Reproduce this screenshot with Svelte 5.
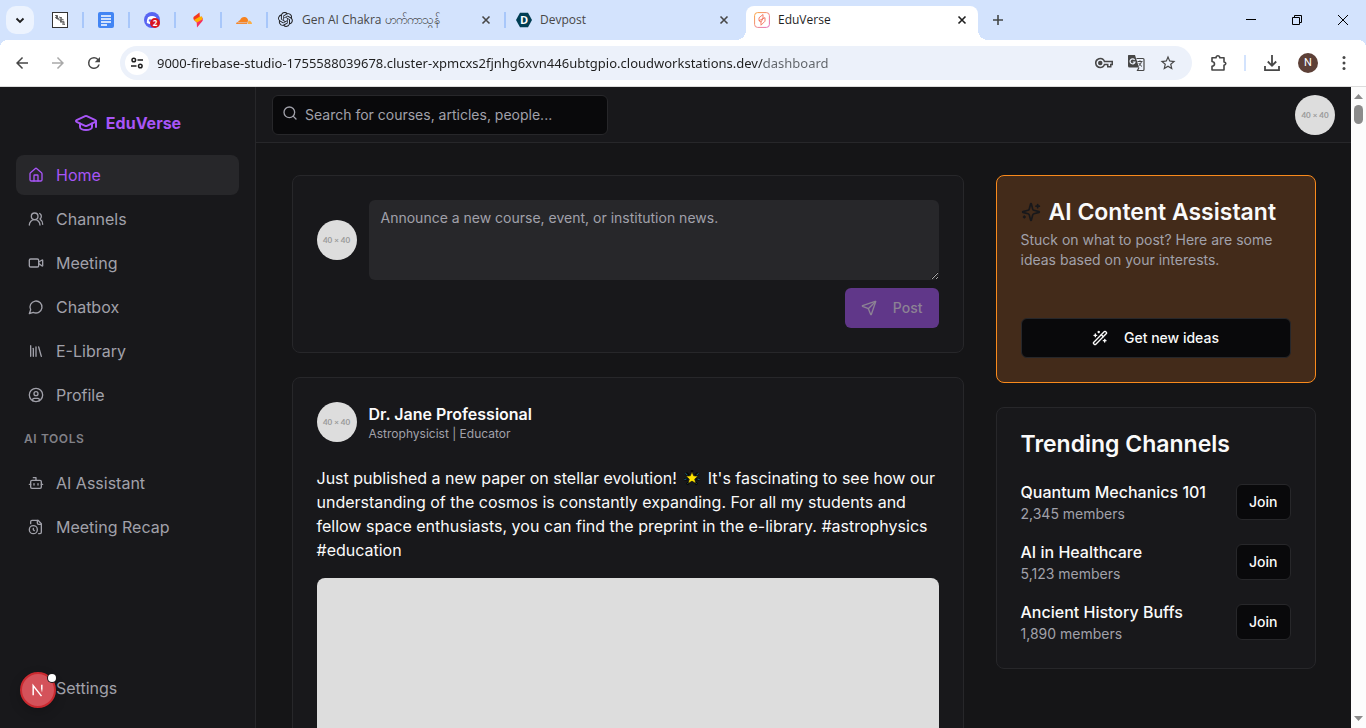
<script lang="ts">
  /**
   * EduVerse dashboard, shown inside its browser window.
   * Stroke icons share a 24-unit grid and are kept as lists of path data.
   */
  type Icon = string[];

  const icons: Record<string, Icon> = {
    cap: [
      'M21.42 10.922a1 1 0 0 0-.019-1.838L12.83 5.18a2 2 0 0 0-1.66 0L2.6 9.08a1 1 0 0 0 0 1.832l8.57 3.908a2 2 0 0 0 1.66 0z',
      'M22 10v6',
      'M6 12.5V16a6 3 0 0 0 12 0v-3.5',
    ],
    home: [
      'M15 21v-8a1 1 0 0 0-1-1h-4a1 1 0 0 0-1 1v8',
      'M3 10a2 2 0 0 1 .709-1.528l7-5.999a2 2 0 0 1 2.582 0l7 5.999A2 2 0 0 1 21 10v9a2 2 0 0 1-2 2H5a2 2 0 0 1-2-2z',
    ],
    users: [
      'M18 21a8 8 0 0 0-16 0',
      'M5 8a5 5 0 1 0 10 0a5 5 0 1 0-10 0',
      'M22 20c0-3.37-2-6.5-4-8a5 5 0 0 0-.45-8.3',
    ],
    video: [
      'm16 13 5.223 3.482a.5.5 0 0 0 .777-.416V7.87a.5.5 0 0 0-.752-.432L16 10.5',
      'M4 6h10a2 2 0 0 1 2 2v8a2 2 0 0 1-2 2H4a2 2 0 0 1-2-2V8a2 2 0 0 1 2-2z',
    ],
    chat: ['M7.9 20A9 9 0 1 0 4 16.1L2 22Z'],
    library: ['m16 6 4 14', 'M12 6v14', 'M8 8v12', 'M4 4v16'],
    profile: [
      'M2 12a10 10 0 1 0 20 0a10 10 0 1 0-20 0',
      'M9 10a3 3 0 1 0 6 0a3 3 0 1 0-6 0',
      'M7 20.662V19a2 2 0 0 1 2-2h6a2 2 0 0 1 2 2v1.662',
    ],
    bot: [
      'M12 8V4H8',
      'M6 8h12a2 2 0 0 1 2 2v8a2 2 0 0 1-2 2H6a2 2 0 0 1-2-2v-8a2 2 0 0 1 2-2z',
      'M2 14h2',
      'M20 14h2',
      'M15 13v2',
      'M9 13v2',
    ],
    recap: [
      'M16 22h2a2 2 0 0 0 2-2V7l-5-5H6a2 2 0 0 0-2 2v3',
      'M14 2v4a2 2 0 0 0 2 2h4',
      'M2 16a6 6 0 1 0 12 0a6 6 0 1 0-12 0',
      'M9.5 17.5 8 16.25V14',
    ],
    settings: [
      'M9 12a3 3 0 1 0 6 0a3 3 0 1 0-6 0',
      'M12 3v3M12 18v3M3 12h3M18 12h3M6 6l2 2M16 16l2 2M6 18l2-2M16 8l2-2',
    ],
    search: ['M3 11a8 8 0 1 0 16 0a8 8 0 1 0-16 0', 'm21 21-4.3-4.3'],
    send: [
      'M14.536 21.686a.5.5 0 0 0 .937-.024l6.5-19a.496.496 0 0 0-.635-.635l-19 6.5a.5.5 0 0 0-.024.937l7.93 3.18a2 2 0 0 1 1.112 1.11z',
      'm21.854 2.147-10.94 10.939',
    ],
    sparkles: [
      'M9.937 15.5A2 2 0 0 0 8.5 14.063l-6.135-1.582a.5.5 0 0 1 0-.962L8.5 9.936A2 2 0 0 0 9.937 8.5l1.582-6.135a.5.5 0 0 1 .963 0L14.063 8.5A2 2 0 0 0 15.5 9.937l6.135 1.581a.5.5 0 0 1 0 .964L15.5 14.063a2 2 0 0 0-1.437 1.437l-1.582 6.135a.5.5 0 0 1-.963 0z',
      'M20 3v4',
      'M22 5h-4',
      'M4 17v2',
      'M5 18H3',
    ],
    wand: [
      'm21.64 3.64-1.28-1.28a1.21 1.21 0 0 0-1.72 0L2.36 18.64a1.21 1.21 0 0 0 0 1.72l1.28 1.28a1.2 1.2 0 0 0 1.72 0L21.64 5.36a1.2 1.2 0 0 0 0-1.72',
      'm14 7 3 3',
      'M5 6v4',
      'M19 14v4',
      'M10 2v2',
      'M7 8H3',
      'M21 16h-4',
      'M11 3H9',
    ],
  };

  const mainNav = [
    { label: 'Home', icon: icons.home },
    { label: 'Channels', icon: icons.users },
    { label: 'Meeting', icon: icons.video },
    { label: 'Chatbox', icon: icons.chat },
    { label: 'E-Library', icon: icons.library },
    { label: 'Profile', icon: icons.profile },
  ];

  const aiNav = [
    { label: 'AI Assistant', icon: icons.bot },
    { label: 'Meeting Recap', icon: icons.recap },
  ];

  const channels = [
    { name: 'Quantum Mechanics 101', members: '2,345' },
    { name: 'AI in Healthcare', members: '5,123' },
    { name: 'Ancient History Buffs', members: '1,890' },
  ];

  const pinned = ['sketch', 'docs', 'discord', 'studio', 'cloud'];

  let url = $state(
    '9000-firebase-studio-1755588039678.cluster-xpmcxs2fjnhg6xvn446ubtgpio.cloudworkstations.dev/dashboard'
  );
  let query = $state('');
  let draft = $state('');
  let current = $state('Home');
</script>

{#snippet stroke(icon: Icon, size: number)}
  <svg
    class="stroke"
    width={size}
    height={size}
    viewBox="0 0 24 24"
    aria-hidden="true"
  >
    {#each icon as d}<path {d} />{/each}
  </svg>
{/snippet}

{#snippet navItem(item: { label: string; icon: Icon })}
  <a
    href="#{item.label}"
    class="nav-item"
    class:active={current === item.label}
    onclick={() => (current = item.label)}
  >
    {@render stroke(item.icon, 16)}
    <span>{item.label}</span>
  </a>
{/snippet}

{#snippet avatar()}
  <span class="avatar">40 × 40</span>
{/snippet}

{#snippet closeIcon()}
  <svg width="10" height="10" viewBox="0 0 10 10" aria-hidden="true">
    <path d="M1.5 1.5l7 7M8.5 1.5l-7 7" fill="none" stroke="currentColor" stroke-width="1.6" />
  </svg>
{/snippet}

{#snippet favicon(name: string)}
  <svg width="16" height="16" viewBox="0 0 16 16" aria-hidden="true">
    {#if name === 'sketch'}
      <rect x=".5" y=".5" width="15" height="15" fill="#fff" stroke="#333" />
      <path d="M3 3.5l3 .5M3 5.5l4 1M4.500 3v4M5.500 3.500v4M7 5l3 1M6 7.500l4 1.500M9 5v6M8 9.500l4 .5M7.500 7l4 .5M10 12l3 .5M12 9.500v3M11 8.500v3" fill="none" stroke="#555" stroke-width=".9" />
    {:else if name === 'docs'}
      <rect width="16" height="16" rx="2" fill="#4285f4" />
      <path d="M3 4h10M3 7h10M3 10h10M3 13h6" fill="none" stroke="#fff" stroke-width="1.3" />
    {:else if name === 'discord'}
      <circle cx="8" cy="8" r="8" fill="#5865f2" />
      <path d="M4 5.2Q8 3 12 5.2Q13.5 8 13.2 11Q8 13.5 2.8 11Q2.5 8 4 5.2z" fill="#fff" />
      <circle cx="6" cy="8.5" r="1.2" fill="#5865f2" />
      <circle cx="11" cy="11" r="5" fill="#d9141e" />
      <text x="11" y="14" text-anchor="middle" fill="#fff" font-size="8" font-weight="700">2</text>
    {:else if name === 'studio'}
      <path d="M9.500 0.500L3.500 5q-.8 2.300 1.200 3.800L10 6.200z" fill="#f5391f" />
      <path d="M5 9l6.500-4.500q2 1.800 1.200 4.200L7 15.500l-.3-5z" fill="#f4305f" />
      <path d="M4 8l5.500-3.200 2.500-.3.600 2.700L7 10.500z" fill="#ffb300" />
    {:else if name === 'cloud'}
      <path d="M0 12q.2-2 2.200-2.300Q2.500 8.200 4 8.200Q5.500 4.800 8.500 5q3 .2 3.600 3.300L11 12z" fill="#f6821f" />
      <path d="M11.700 12l.8-3.500q3 .1 3.500 3.500z" fill="#fbad41" />
      <path d="M1.500 10.700h9.300" fill="none" stroke="#d3e3fd" stroke-width=".6" />
    {:else if name === 'openai'}
      <g transform="scale(.62)">
        <path
          fill="#202124"
          d="M22.282 9.821a5.985 5.985 0 0 0-.516-4.91 6.046 6.046 0 0 0-6.51-2.9A6.065 6.065 0 0 0 4.981 4.182a5.985 5.985 0 0 0-3.998 2.9 6.046 6.046 0 0 0 .743 7.096 5.98 5.98 0 0 0 .511 4.911 6.051 6.051 0 0 0 6.515 2.9A5.985 5.985 0 0 0 13.26 24a6.056 6.056 0 0 0 5.772-4.206 5.99 5.99 0 0 0 3.998-2.9 6.056 6.056 0 0 0-.748-7.073zM13.26 22.43a4.476 4.476 0 0 1-2.876-1.041l.142-.08 4.778-2.759a.795.795 0 0 0 .393-.681v-6.737l2.02 1.169a.071.071 0 0 1 .038.052v5.583a4.504 4.504 0 0 1-4.495 4.494zM3.599 18.304a4.471 4.471 0 0 1-.534-3.014l.142.085 4.783 2.759a.771.771 0 0 0 .78 0l5.843-3.369v2.332a.08.08 0 0 1-.033.062L9.74 19.95a4.5 4.5 0 0 1-6.141-1.646zM2.341 7.896a4.485 4.485 0 0 1 2.365-1.973V11.6a.766.766 0 0 0 .388.677l5.814 3.354-2.02 1.168a.076.076 0 0 1-.071 0l-4.83-2.786A4.504 4.504 0 0 1 2.341 7.872zm16.596 3.855l-5.833-3.387L15.119 7.2a.076.076 0 0 1 .071 0l4.83 2.791a4.494 4.494 0 0 1-.676 8.105v-5.678a.79.79 0 0 0-.407-.667zm2.011-3.023l-.142-.085-4.774-2.782a.776.776 0 0 0-.785 0L9.409 9.23V6.897a.066.066 0 0 1 .028-.061l4.83-2.787a4.5 4.5 0 0 1 6.681 4.66zM8.307 12.863l-2.02-1.164a.08.08 0 0 1-.038-.057V6.074a4.5 4.5 0 0 1 7.375-3.453l-.142.08L8.704 5.459a.795.795 0 0 0-.393.681zm1.097-2.365l2.602-1.5 2.607 1.5v2.999l-2.597 1.5-2.607-1.5z"
        />
      </g>
    {:else if name === 'devpost'}
      <path d="M4 .8h8l4 7.2-4 7.2H4L0 8z" fill="#003e54" />
      <text x="8" y="12" text-anchor="middle" fill="#fff" font-size="11" font-weight="700">D</text>
    {:else}
      <rect x=".6" y=".6" width="14.8" height="14.8" rx="3" fill="#fff" stroke="url(#edu-edge)" />
      <path d="M9 2.5L5 5.800v3L9 6.500zM9 6.500l2-.8v3.500l-4 4V10zM5 8.800l2 1.200" fill="none" stroke="#f4705a" stroke-width=".9" />
      <defs>
        <linearGradient id="edu-edge" x1="0" y1="0" x2="1" y2="1">
          <stop offset="0" stop-color="#fba43c" />
          <stop offset="1" stop-color="#e36bc0" />
        </linearGradient>
      </defs>
    {/if}
  </svg>
{/snippet}

<div class="window">
  <div class="tab-strip">
    <button type="button" class="tab-search" aria-label="Search tabs">
      <svg width="10" height="10" viewBox="0 0 10 10" aria-hidden="true">
        <path d="M1.5 3.500L5 7l3.500-3.500" fill="none" stroke="#1f1f1f" stroke-width="1.8" />
      </svg>
    </button>
    {#each pinned as name}
      <button type="button" class="tab pinned" aria-label={name}>{@render favicon(name)}</button>
    {/each}
    <div class="tab">
      {@render favicon('openai')}
      <span class="tab-title">Gen AI Chakra ဟက်ကာသွန်</span>
      <button type="button" class="tab-close" aria-label="Close tab">{@render closeIcon()}</button>
    </div>
    <div class="tab last">
      {@render favicon('devpost')}
      <span class="tab-title">Devpost</span>
      <button type="button" class="tab-close" aria-label="Close tab">{@render closeIcon()}</button>
    </div>
    <div class="tab selected">
      {@render favicon('eduverse')}
      <span class="tab-title">EduVerse</span>
      <button type="button" class="tab-close" aria-label="Close tab">{@render closeIcon()}</button>
    </div>
    <button type="button" class="new-tab" aria-label="New tab">
      <svg width="12" height="12" viewBox="0 0 12 12" aria-hidden="true">
        <path d="M6 1v10M1 6h10" fill="none" stroke="#444746" stroke-width="1.6" />
      </svg>
    </button>
    <div class="window-controls">
      <button type="button" aria-label="Minimize">
        <svg width="10" height="10" viewBox="0 0 10 10" aria-hidden="true"><path d="M0 4.500h10" stroke="#000" /></svg>
      </button>
      <button type="button" aria-label="Restore">
        <svg width="10" height="10" viewBox="0 0 10 10" aria-hidden="true">
          <path d="M.5 2.500h7v7h-7zM2.500 2.500v-2h7v7h-2" fill="none" stroke="#000" />
        </svg>
      </button>
      <button type="button" aria-label="Close">
        <svg width="10" height="10" viewBox="0 0 10 10" aria-hidden="true"><path d="M0 0l10 10M10 0L0 10" stroke="#000" /></svg>
      </button>
    </div>
  </div>

  <div class="toolbar">
    <button type="button" class="tool" aria-label="Back">
      <svg width="18" height="18" viewBox="0 0 24 24" aria-hidden="true"><path d="M20 11H7.83l5.590-5.590L12 4l-8 8 8 8 1.410-1.410L7.830 13H20z" /></svg>
    </button>
    <button type="button" class="tool dim" aria-label="Forward">
      <svg width="18" height="18" viewBox="0 0 24 24" aria-hidden="true"><path d="M4 11h12.170l-5.590-5.590L12 4l8 8-8 8-1.410-1.410L16.170 13H4z" /></svg>
    </button>
    <button type="button" class="tool" aria-label="Reload">
      <svg width="18" height="18" viewBox="0 0 24 24" aria-hidden="true">
        <path d="M17.650 6.350A7.960 7.960 0 0 0 12 4a8 8 0 1 0 7.730 10h-2.080A6 6 0 1 1 12 6c1.660 0 3.140.69 4.220 1.780L13 11h7V4z" />
      </svg>
    </button>
    <div class="address">
      <button type="button" class="site-info" aria-label="View site information">
        <svg width="14" height="14" viewBox="0 0 14 14" aria-hidden="true">
          <path d="M2 4a1.800 1.800 0 1 0 3.600 0a1.800 1.800 0 1 0-3.600 0M7.500 4H13M8.500 10a1.800 1.800 0 1 0 3.600 0a1.800 1.800 0 1 0-3.600 0M1 10h5.500" fill="none" stroke="#1f1f1f" stroke-width="1.5" />
        </svg>
      </button>
      <input class="url" type="text" aria-label="Address" bind:value={url} />
      <button type="button" class="page-action" aria-label="Passwords">
        <svg width="18" height="18" viewBox="0 0 24 24" aria-hidden="true">
          <path d="M22 18h-6v-3h-2.680A6.800 6.800 0 0 1 7 19a7 7 0 1 1 6.320-10H24v6h-2zm-4-2h2v-3h2v-2H11.940A5 5 0 1 0 11.940 13H18zM7 15a3 3 0 1 1 0-6 3 3 0 0 1 0 6z" />
        </svg>
      </button>
      <button type="button" class="page-action" aria-label="Translate this page">
        <svg width="18" height="18" viewBox="0 0 18 18" aria-hidden="true">
          <path d="M1.500 1H8l4 12.500H2.500Q1 13.500 1 12V2q0-1 .5-1z" />
          <path d="M9.500 4.500H16q1 0 1 1v10q0 1-1 1h-5.500l1.500-3" fill="none" stroke="#474747" stroke-width="1.2" />
          <path d="M7.600 5.900A2.500 2.500 0 1 0 8 8H5.800" fill="none" stroke="#ecf1fa" stroke-width="1.2" />
          <path d="M10.500 7.500h5M13 6.300v1.200M14.500 7.500Q14 10.500 11.500 12M11.800 9q1 2 3.200 3.500" fill="none" stroke="#474747" />
        </svg>
      </button>
      <button type="button" class="page-action" aria-label="Bookmark this tab">
        <svg width="18" height="18" viewBox="0 0 24 24" aria-hidden="true">
          <path d="M22 9.240l-7.190-.62L12 2 9.190 8.630 2 9.240l5.460 4.730L5.820 21 12 17.270 18.180 21l-1.630-7.030zM12 15.400l-3.760 2.270 1-4.280-3.320-2.880 4.380-.38L12 6.100l1.710 4.040 4.380.38-3.320 2.880 1 4.280z" />
        </svg>
      </button>
    </div>
    <div class="tool-group">
      <button type="button" class="tool" aria-label="Extensions">
        <svg width="18" height="18" viewBox="0 0 18 18" aria-hidden="true">
          <path d="M3 3.800H7Q7.200 1.800 8.900 1.800T10.800 3.800H15V8Q16.800 8.300 16.800 9.500T15 11.200V16H3V12.300Q5.500 11.800 5.500 9.900T3 7.500z" fill="none" stroke="#474747" stroke-width="1.6" stroke-linejoin="round" />
        </svg>
      </button>
      <span class="divider"></span>
      <button type="button" class="tool" aria-label="Downloads">
        <svg width="18" height="18" viewBox="0 0 18 18" aria-hidden="true">
          <path d="M9 1v10.500M4.800 7.500L9 11.700l4.200-4.200M2 12v4.200h14V12" fill="none" stroke="#474747" stroke-width="1.8" />
        </svg>
      </button>
      <button type="button" class="tool" aria-label="Account"><span class="account">N</span></button>
      <button type="button" class="tool" aria-label="Menu">
        <svg width="18" height="18" viewBox="0 0 18 18" aria-hidden="true">
          <circle cx="9" cy="3.5" r="1.5" /><circle cx="9" cy="9" r="1.5" /><circle cx="9" cy="14.5" r="1.5" />
        </svg>
      </button>
    </div>
  </div>

  <div class="viewport">
    <aside class="sidebar">
      <a href="#home" class="brand">
        {@render stroke(icons.cap, 24)}
        <span>EduVerse</span>
      </a>
      <nav class="nav">
        {#each mainNav as item}{@render navItem(item)}{/each}
        <h2 class="nav-heading">AI TOOLS</h2>
        {#each aiNav as item}{@render navItem(item)}{/each}
      </nav>
      <div class="nav-footer">
        {@render navItem({ label: 'Settings', icon: icons.settings })}
      </div>
      <button type="button" class="dev-badge" aria-label="Open Next.js dev tools">
        <svg width="14" height="14" viewBox="0 0 16 16" aria-hidden="true">
          <defs>
            <linearGradient id="n-fade" x1="0" y1="0" x2="0" y2="1">
              <stop offset=".5" stop-color="#fff" />
              <stop offset="1" stop-color="#fff" stop-opacity="0" />
            </linearGradient>
          </defs>
          <path d="M2.500 14V3l9.500 12" fill="none" stroke="#fff" stroke-width="1.7" />
          <path d="M11.500 2h1.700v9h-1.700z" fill="url(#n-fade)" />
        </svg>
      </button>
    </aside>

    <div class="content">
      <header class="topbar">
        <label class="search">
          {@render stroke(icons.search, 16)}
          <input type="search" aria-label="Search" placeholder="Search for courses, articles, people..." bind:value={query} />
        </label>
        {@render avatar()}
      </header>

      <main class="main">
        <div class="grid">
          <div class="feed">
            <form class="card composer" onsubmit={(e) => e.preventDefault()}>
              <div class="composer-row">
                {@render avatar()}
                <textarea aria-label="New post" placeholder="Announce a new course, event, or institution news." bind:value={draft}></textarea>
              </div>
              <button type="submit" class="post-button" disabled={!draft}>
                {@render stroke(icons.send, 16)}
                <span>Post</span>
              </button>
            </form>

            <article class="card post">
              <div class="author">
                {@render avatar()}
                <div>
                  <h3 class="author-name">Dr. Jane Professional</h3>
                  <p class="author-role">Astrophysicist | Educator</p>
                </div>
              </div>
              <p class="post-text">
                Just published a new paper on stellar evolution!
                <svg class="star" width="22" height="16" viewBox="0 0 22 16" role="img" aria-label="glowing star">
                  <path d="M5 3l3 2.500M17 3l-3 2.500M3.500 9.500l3-.5M18.500 9.500l-3-.5M6 14.500l1.500-2M16 14.500l-1.500-2M11 0v2" stroke="#060606" stroke-width="2.5" />
                  <path d="M4.500 3.500l2 1.500M17.500 3.500l-2 1.500M3.500 9.500l2-.5M18.500 9.500l-2-.5M6.500 13.500l1-1M15.500 13.500l-1-1" stroke="#12708c" />
                  <path d="M11 1.800l1.700 4 4.400.4-3.400 2.900 1.100 4.400-3.800-2.400-3.800 2.400 1.100-4.400-3.400-2.900 4.400-.4z" fill="#fde300" stroke="#0b0b0b" stroke-width=".6" />
                </svg>
                It's fascinating to see how our understanding of the cosmos is constantly expanding. For all my
                students and fellow space enthusiasts, you can find the preprint in the e-library. #astrophysics
                #education
              </p>
              <div class="post-image"></div>
            </article>
          </div>

          <div class="rail">
            <section class="card assistant">
              <h2 class="card-title">
                {@render stroke(icons.sparkles, 20)}
                <span>AI Content Assistant</span>
              </h2>
              <p class="hint">Stuck on what to post? Here are some ideas based on your interests.</p>
              <button type="button" class="outline-button ideas">
                {@render stroke(icons.wand, 16)}
                <span>Get new ideas</span>
              </button>
            </section>

            <section class="card">
              <h2 class="card-title">Trending Channels</h2>
              <ul class="channels">
                {#each channels as channel}
                  <li>
                    <div>
                      <p class="channel-name">{channel.name}</p>
                      <p class="channel-members">{channel.members} members</p>
                    </div>
                    <button type="button" class="outline-button join">Join</button>
                  </li>
                {/each}
              </ul>
            </section>
          </div>
        </div>
      </main>
    </div>

    <div class="scrollbar" aria-hidden="true">
      <svg width="9" height="5" viewBox="0 0 9 5"><path d="M0 5l4.500-5L9 5z" fill="#8b8b8b" /></svg>
      <span class="thumb"></span>
      <svg width="9" height="5" viewBox="0 0 9 5"><path d="M0 0l4.500 5L9 0z" fill="#8b8b8b" /></svg>
    </div>
  </div>
</div>

<style>
  :global(body) {
    margin: 0;
    background: #09090b;
    overflow: hidden;
  }

  .window {
    --card: #18181b;
    --border: #27272a;
    --muted: #a1a1aa;
    --text: #fafafa;
    --accent: #a855f7;
    display: flex;
    flex-direction: column;
    height: 100vh;
    font-family: Inter, 'Liberation Sans', sans-serif;
    color: var(--text);
  }

  .window *,
  .window *::before,
  .window *::after {
    box-sizing: border-box;
  }

  svg {
    flex: none;
  }

  button {
    display: flex;
    align-items: center;
    justify-content: center;
    padding: 0;
    border: 0;
    background: none;
    font: inherit;
    color: inherit;
    cursor: pointer;
  }

  h2,
  h3,
  p,
  ul {
    margin: 0;
    padding: 0;
    list-style: none;
  }

  a {
    color: inherit;
    text-decoration: none;
  }

  .stroke {
    fill: none;
    stroke: currentColor;
    stroke-width: 2;
    stroke-linecap: round;
    stroke-linejoin: round;
  }

  /* browser chrome */
  .tab-strip {
    display: flex;
    flex: none;
    height: 40px;
    background: #d3e3fd;
    font: 12px/16px 'Open Sans', 'Noto Sans', sans-serif;
    color: #474747;
  }

  .tab-search {
    width: 28px;
    height: 28px;
    margin: 6px 3px 0 6px;
    border-radius: 10px;
    background: #ecf3fe;
  }

  .tab {
    position: relative;
    display: flex;
    align-items: center;
    width: 238px;
    padding: 0 14px 0 11px;
    gap: 8px;
  }

  .tab.pinned {
    width: 46px;
    padding: 0;
  }

  .tab:not(.selected):not(.last)::after {
    content: '';
    position: absolute;
    right: -1px;
    top: 12px;
    width: 2px;
    height: 16px;
    background: #a8c7fa;
  }

  .tab-title {
    flex: 1;
    white-space: nowrap;
    overflow: hidden;
  }

  .tab-close {
    width: 10px;
    height: 16px;
  }

  .tab.selected {
    width: 232px;
    height: 34px;
    margin: 6px 3px 0;
    padding: 0 11px 6px 8px;
    border-radius: 8px 8px 0 0;
    background: #fff;
    color: #1f1f1f;
  }

  .tab.selected::before,
  .tab.selected::after {
    content: '';
    position: absolute;
    bottom: 0;
    width: 10px;
    height: 10px;
  }

  .tab.selected::before {
    left: -10px;
    background: radial-gradient(circle at 0 0, transparent 10px, #fff 10px);
  }

  .tab.selected::after {
    right: -10px;
    background: radial-gradient(circle at 100% 0, transparent 10px, #fff 10px);
  }

  .new-tab {
    width: 28px;
    margin-left: 3px;
  }

  .window-controls {
    display: flex;
    margin-left: auto;
  }

  .window-controls button {
    width: 46px;
  }

  .toolbar {
    display: flex;
    flex: none;
    align-items: center;
    height: 47px;
    padding: 0 4px;
    border-bottom: 1px solid #dcdcdc;
    background:
      radial-gradient(circle at 8px 8px, transparent 8px, #d3e3fd 8px) 0 0 / 8px 8px no-repeat,
      radial-gradient(circle at 0 8px, transparent 8px, #d3e3fd 8px) 100% 0 / 8px 8px no-repeat,
      #fff;
    fill: #474747;
  }

  .tool {
    width: 36px;
    height: 34px;
  }

  .tool.dim {
    fill: #a9a9a9;
  }

  .address {
    display: flex;
    flex: 1;
    align-items: center;
    height: 34px;
    margin-left: 8px;
    padding: 0 8px 0 5px;
    border-radius: 17px;
    background: #ecf1fa;
  }

  .site-info {
    width: 24px;
    height: 24px;
    border-radius: 50%;
    background: #fff;
  }

  .url {
    flex: 1;
    min-width: 0;
    height: 24px;
    margin-left: 8px;
    padding: 0;
    border: 0;
    outline: 0;
    /* host in full strength, the path after it dimmed */
    background: linear-gradient(90deg, #1f1f1f 607px, #5f6368 607px) text;
    color: transparent;
    caret-color: #1f1f1f;
    font: 13px/20px 'Noto Sans', 'Open Sans', sans-serif;
  }

  .page-action {
    width: 32px;
    height: 28px;
  }

  .tool-group {
    display: flex;
    align-items: center;
    margin-left: 8px;
  }

  .divider {
    width: 2px;
    height: 16px;
    margin: 0 8px;
    background: #d3e3fd;
  }

  .account {
    width: 20px;
    height: 20px;
    border-radius: 50%;
    background: #5d4037;
    color: #fff;
    font: 11px/20px Roboto, sans-serif;
  }

  /* page */
  .viewport {
    display: flex;
    flex: 1;
    min-height: 0;
    background: #151517;
  }

  .sidebar {
    position: relative;
    display: flex;
    flex-direction: column;
    flex: none;
    width: 256px;
    padding: 24px 16px 20px;
    border-right: 1px solid var(--border);
    background: var(--card);
  }

  .brand {
    display: flex;
    align-items: center;
    justify-content: center;
    gap: 8px;
    height: 24px;
    margin-bottom: 20px;
    color: var(--accent);
    font-size: 16px;
    line-height: 24px;
    font-weight: 700;
  }

  .nav {
    display: flex;
    flex-direction: column;
    gap: 4px;
  }

  .nav-item {
    display: flex;
    align-items: center;
    gap: 12px;
    height: 40px;
    padding: 0 12px;
    border-radius: 8px;
    color: var(--muted);
    font-size: 16px;
    line-height: 24px;
  }

  .nav-item.active {
    background: var(--border);
    color: var(--accent);
  }

  .nav-heading {
    padding: 12px 8px;
    color: #818188;
    font-size: 12px;
    line-height: 16px;
    font-weight: 600;
    letter-spacing: 0.05em;
  }

  .nav-footer {
    margin-top: auto;
  }

  /* floats over the settings row */
  .dev-badge {
    position: absolute;
    left: 20px;
    bottom: 20px;
    width: 36px;
    height: 36px;
    border: 2px solid #ca2a30;
    border-radius: 50%;
    background: #d4525a;
    box-shadow: 0 4px 12px rgba(0, 0, 0, 0.2);
  }

  .dev-badge::after {
    content: '';
    position: absolute;
    top: 0;
    right: -2px;
    width: 8px;
    height: 8px;
    border-radius: 50%;
    background: #fff;
    box-shadow: 0 0 0 1px var(--card);
  }

  .content {
    display: flex;
    flex: 1;
    flex-direction: column;
    min-width: 0;
    overflow: hidden;
  }

  .topbar {
    display: flex;
    flex: none;
    align-items: center;
    justify-content: space-between;
    height: 56px;
    padding: 0 16px;
    border-bottom: 1px solid var(--border);
    background: var(--card);
  }

  .search {
    position: relative;
    width: 336px;
    color: var(--muted);
  }

  .search .stroke {
    position: absolute;
    left: 10px;
    top: 10px;
  }

  .search input {
    display: block;
    width: 100%;
    height: 40px;
    padding: 8px 12px 8px 32px;
    border: 1px solid var(--border);
    border-radius: 6px;
    outline: 0;
    background: #09090b;
    color: var(--text);
    font: inherit;
    font-size: 14px;
    line-height: 20px;
  }

  .search input::placeholder,
  .composer textarea::placeholder {
    color: var(--muted);
    opacity: 1;
  }

  .avatar {
    flex: none;
    width: 40px;
    height: 40px;
    border-radius: 50%;
    background: #ddd;
    color: #999;
    font: 700 8px/40px Lato, sans-serif;
    text-align: center;
    white-space: nowrap;
  }

  .main {
    flex: 1;
    padding: 32px 24px;
  }

  .grid {
    display: grid;
    grid-template-columns: repeat(3, minmax(0, 1fr));
    gap: 32px;
    max-width: 1024px;
    margin: 0 auto;
    align-items: start;
  }

  .feed {
    grid-column: span 2;
  }

  .feed,
  .rail {
    display: flex;
    flex-direction: column;
    gap: 24px;
  }

  .card {
    padding: 24px;
    border: 1px solid var(--border);
    border-radius: 8px;
    background: var(--card);
  }

  .composer {
    display: flex;
    flex-direction: column;
    align-items: flex-end;
    gap: 8px;
  }

  .composer-row {
    display: flex;
    align-items: center;
    gap: 12px;
    width: 100%;
  }

  .composer textarea {
    flex: 1;
    min-width: 0;
    height: 80px;
    padding: 8px 12px;
    border: 0;
    border-radius: 6px;
    outline: 0;
    resize: vertical;
    background: var(--border);
    color: var(--text);
    font: inherit;
    font-size: 14px;
    line-height: 20px;
  }

  .post-button {
    gap: 16px;
    height: 40px;
    padding: 0 16px;
    border-radius: 6px;
    background: var(--accent);
    color: #fafafa;
    font-size: 14px;
    line-height: 20px;
    font-weight: 500;
  }

  .post-button:disabled {
    background: #603789;
    color: #8c8294;
    cursor: default;
  }

  .author {
    display: flex;
    gap: 12px;
    margin-bottom: 24px;
  }

  .author-name {
    font-size: 16px;
    line-height: 24px;
    font-weight: 600;
  }

  .author-role {
    color: var(--muted);
    font-size: 12px;
    line-height: 16px;
  }

  .post-text {
    font-size: 16px;
    line-height: 24px;
  }

  .star {
    vertical-align: -2px;
  }

  .post-image {
    height: 350px;
    margin-top: 16px;
    border-radius: 8px;
    background: #ddd;
  }

  .card-title {
    display: flex;
    align-items: center;
    gap: 8px;
    font-size: 23px;
    line-height: 24px;
    font-weight: 600;
    white-space: nowrap;
  }

  .assistant {
    border-color: #f98a1c;
    background: #432b1a;
  }

  .assistant .card-title .stroke {
    color: #18181b;
  }

  .hint {
    margin-top: 6px;
    color: var(--muted);
    font-size: 14px;
    line-height: 20px;
  }

  .outline-button {
    border: 1px solid var(--border);
    border-radius: 6px;
    background: #09090b;
    font-size: 14px;
    line-height: 20px;
    font-weight: 500;
  }

  .ideas {
    gap: 16px;
    width: 100%;
    height: 40px;
    margin-top: 48px;
  }

  .join {
    height: 36px;
    padding: 0 12px;
  }

  .channels {
    display: flex;
    flex-direction: column;
    gap: 16px;
    margin-top: 24px;
  }

  .channels li {
    display: flex;
    align-items: center;
    justify-content: space-between;
  }

  .channel-name {
    font-size: 16px;
    line-height: 24px;
    font-weight: 500;
  }

  .channel-members {
    color: var(--muted);
    font-size: 14px;
    line-height: 20px;
  }

  .scrollbar {
    display: flex;
    flex: none;
    flex-direction: column;
    align-items: center;
    width: 15px;
    padding: 7px 0;
    background: #fcfcfc;
  }

  .thumb {
    width: 9px;
    height: 19px;
    margin: 6px 0 auto;
    border-radius: 5px;
    background: #8b8b8b;
  }
</style>
